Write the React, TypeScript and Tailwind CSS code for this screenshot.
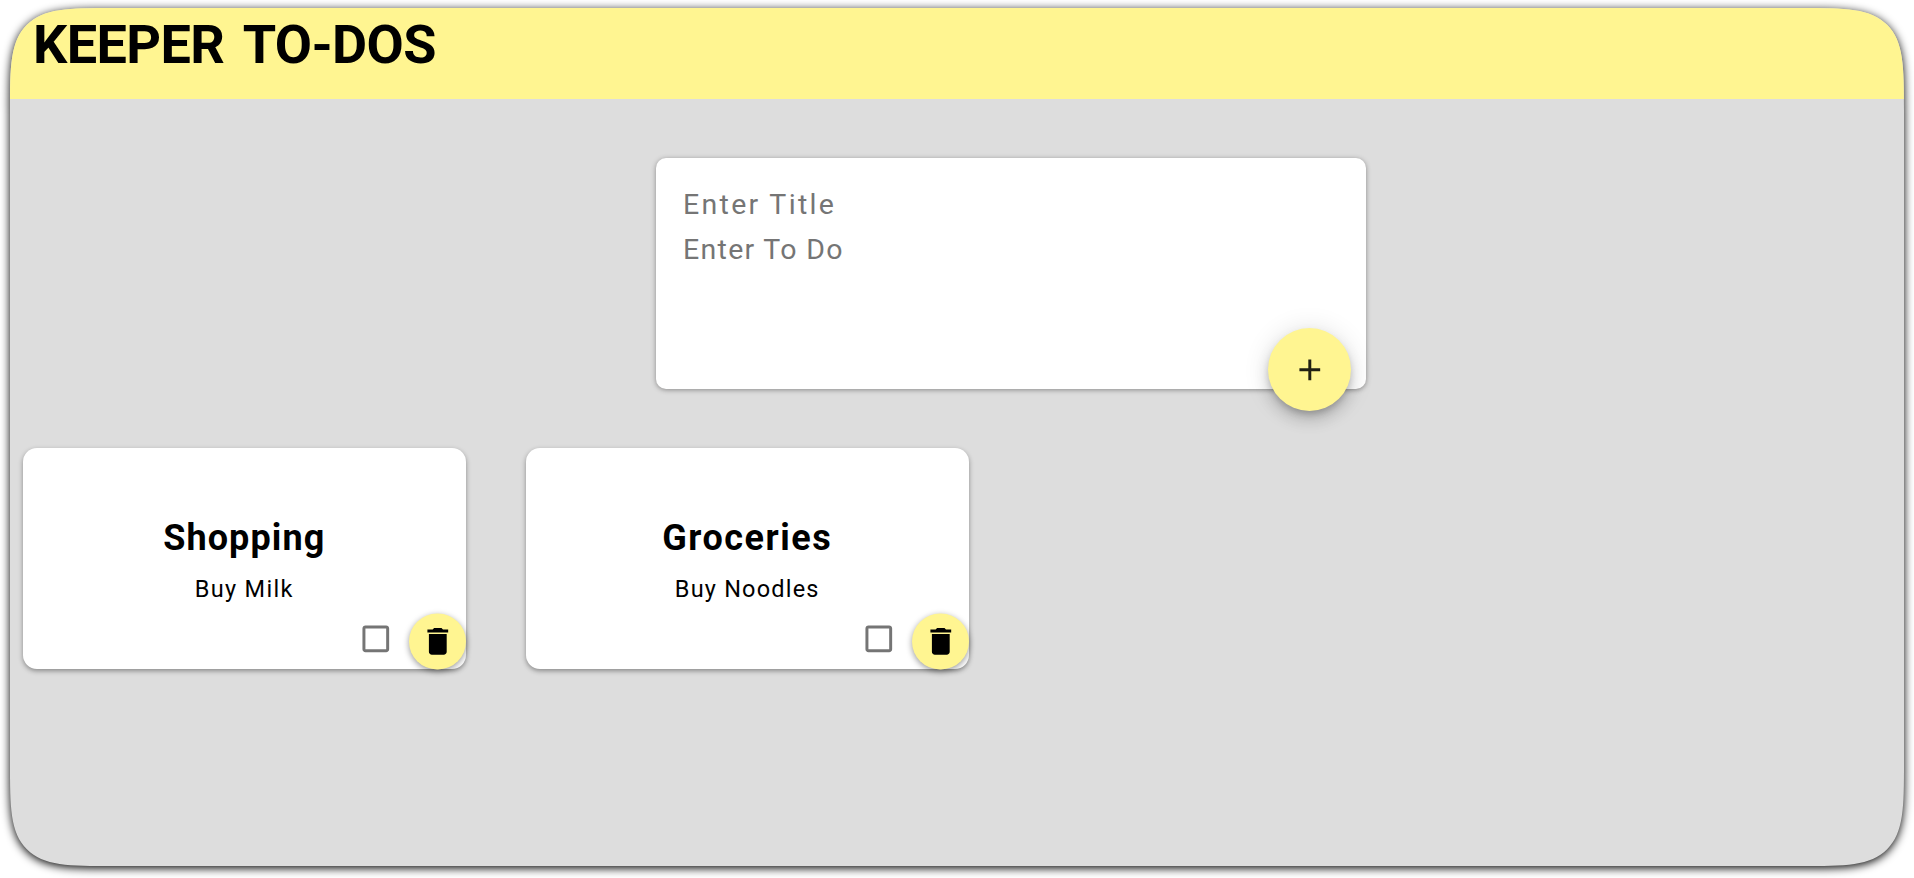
import { MdAdd, MdCheckBoxOutlineBlank, MdDelete } from "react-icons/md";

type Note = { title: string; body: string; titleSpacing: string; bodySpacing: string };

const notes: Note[] = [
  { title: "Shopping", body: "Buy Milk", titleSpacing: "tracking-[1.1px]", bodySpacing: "tracking-[1.3px]" },
  { title: "Groceries", body: "Buy Noodles", titleSpacing: "tracking-[1.5px]", bodySpacing: "tracking-[1.2px]" },
];

function NoteCard({ note }: { note: Note }) {
  return (
    <article className="flex h-[221px] w-[443.5px] flex-col rounded-[14px] bg-white pt-[70px] text-center text-black shadow-[0_2px_5px_rgba(0,0,0,0.38)]">
      <h2 className={`text-[36px] leading-[40px] font-bold ${note.titleSpacing}`}>{note.title}</h2>
      <p className={`mt-[16px] text-[23.5px] leading-[30px] ${note.bodySpacing}`}>{note.body}</p>
      <div className="mt-auto flex h-[57px] items-center justify-end">
        <MdCheckBoxOutlineBlank className="mr-[15px] mb-[4px] size-[35.6px] text-[#757575]" />
        <button className="flex h-[56px] w-[57px] translate-y-[0.5px] items-center justify-center rounded-full bg-[#fff591] shadow-[0_2px_6px_rgba(0,0,0,0.4)]">
          <MdDelete className="size-[35.6px]" />
        </button>
      </div>
    </article>
  );
}

export default function App() {
  return (
    <div className="h-[878px] w-full overflow-hidden bg-white px-[10px] pt-[8px] font-['Roboto',sans-serif]">
      <div className="h-[858px] overflow-hidden rounded-[106px] bg-[#dddddd] shadow-[0_2px_10px_#000] [corner-shape:squircle]">
        <header className="h-[91px] bg-[#fff591] pt-[7px] pl-[23px]">
          <h1 className="text-[54px] leading-[60px] font-bold tracking-[-0.6px] text-black [word-spacing:7px]">KEEPER TO-DOS</h1>
        </header>
        <form className="mt-[59px] ml-[646px] flex h-[231px] w-[710px] flex-col rounded-[10px] bg-white pt-[23px] pl-[27px] shadow-[0_1px_5px_rgb(138,137,137)]">
          <input
            aria-label="Title"
            placeholder="Enter Title"
            className="h-[46px] w-[640px] shrink-0 text-[28.5px] tracking-[2.3px] outline-none placeholder:text-[#757575]"
          />
          <textarea
            aria-label="To do"
            placeholder="Enter To Do"
            className="h-[92px] w-[640px] shrink-0 resize-none text-[28.5px] leading-[46px] tracking-[1.3px] outline-none placeholder:text-[#757575]"
          />
          <button
            type="button"
            className="mt-[9px] mr-[15px] flex size-[83px] shrink-0 items-center justify-center self-end rounded-full bg-[#fff591] text-black/87 shadow-[0_4.5px_7px_-1.5px_rgba(0,0,0,0.2),0_9px_15px_rgba(0,0,0,0.14),0_1.5px_27px_rgba(0,0,0,0.12)]"
          >
            <MdAdd className="size-[35.6px]" />
          </button>
        </form>
        <main className="mt-[59px] ml-[12.5px] flex gap-[59.5px]">
          {notes.map((note) => (
            <NoteCard key={note.title} note={note} />
          ))}
        </main>
      </div>
    </div>
  );
}
